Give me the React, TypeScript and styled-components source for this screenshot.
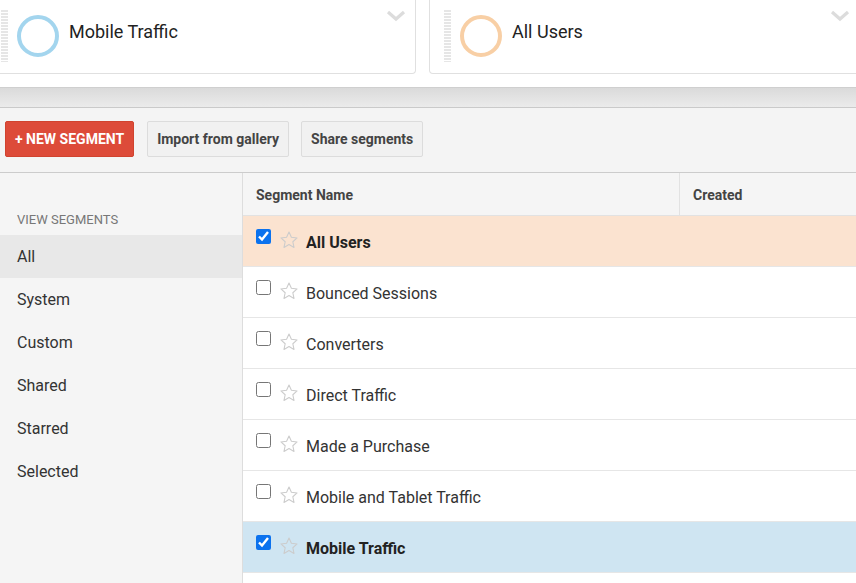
import React from "react";
import styled, { createGlobalStyle } from "styled-components";

const GlobalStyle = createGlobalStyle`
  html, body {
    margin: 0;
    padding: 0;
    background: #ffffff;
    font-family: Roboto, "Liberation Sans", Arial, sans-serif;
    overflow: hidden;
  }
`;

const PageWrapper = styled.main`
  width: 856px;
  height: 583px;
  overflow: hidden;
  display: flex;
  flex-direction: column;
`;

/* =========================
   SEGMENT CARDS
========================= */

const CardStrip = styled.div`
  height: 87px;
  display: flex;
  gap: 13px;
  background: #ffffff;
  flex-shrink: 0;
`;

const Card = styled.div<{ $first?: boolean }>`
  position: relative;
  box-sizing: border-box;
  height: 74px;
  margin-left: ${(p) => (p.$first ? "-14px" : "0")};
  width: ${(p) => (p.$first ? "430px" : "auto")};
  flex: ${(p) => (p.$first ? "0 0 430px" : "1 1 auto")};
  margin-right: ${(p) => (p.$first ? "0" : "-30px")};
  border: 1px solid #e0e0e0;
  border-top: none;
  border-radius: 0 0 4px 4px;
  display: flex;
  align-items: flex-start;
  padding-left: 14px;
`;

const Handle = styled.div`
  width: 7px;
  height: 52px;
  margin-top: 10px;
  background: repeating-linear-gradient(
    to bottom,
    #e6e6e6 0px,
    #e6e6e6 2px,
    #ffffff 2px,
    #ffffff 3px
  );
`;

const Ring = styled.div<{ $color: string }>`
  box-sizing: border-box;
  width: 42px;
  height: 42px;
  margin: 15px 10px 0 9px;
  border-radius: 50%;
  border: 4px solid ${(p) => p.$color};
`;

const CardTitle = styled.div`
  margin-top: 20px;
  font-size: 18px;
  line-height: 24px;
  color: #222;
`;

const Chevron = styled.svg<{ $right: number }>`
  position: absolute;
  top: 10px;
  right: ${(p) => p.$right}px;
`;

/* =========================
   BAND + TOOLBAR
========================= */

const Band = styled.div`
  height: 19px;
  flex-shrink: 0;
  border-top: 1px solid #cfcfcf;
  border-bottom: 1px solid #cacaca;
  background: linear-gradient(to bottom, #dadada, #ebebeb);
`;

const Toolbar = styled.div`
  height: 65px;
  flex-shrink: 0;
  box-sizing: border-box;
  padding: 13px 0 0 5px;
  display: flex;
  align-items: flex-start;
  gap: 12px;
  background: #f4f4f4;
  border-bottom: 1px solid #cccccc;
`;

const Button = styled.button<{ $primary?: boolean }>`
  height: 36px;
  box-sizing: border-box;
  padding: 0 9px;
  border-radius: 2px;
  font-family: Roboto, "Liberation Sans", Arial, sans-serif;
  font-size: 14px;
  font-weight: 700;
  color: ${(p) => (p.$primary ? "#ffffff" : "#444")};
  background: ${(p) => (p.$primary ? "#dd4b39" : "#f1f1f1")};
  border: 1px solid ${(p) => (p.$primary ? "#d0432f" : "#dcdcdc")};
  margin-right: ${(p) => (p.$primary ? "1px" : "0")};
  cursor: pointer;
`;

/* =========================
   MAIN: SIDEBAR + TABLE
========================= */

const Main = styled.div`
  flex: 1;
  display: flex;
  min-height: 0;
`;

const Sidebar = styled.nav`
  width: 243px;
  flex-shrink: 0;
  box-sizing: border-box;
  padding-top: 39px;
  background: #f5f5f5;
  border-right: 1px solid #dddddd;
`;

const SideLabel = styled.div`
  padding-left: 17px;
  font-size: 13px;
  line-height: 16px;
  color: #777;
  text-transform: uppercase;
  margin-bottom: 7px;
`;

const SideItem = styled.div<{ $active?: boolean }>`
  height: 43px;
  display: flex;
  align-items: center;
  padding-left: 17px;
  font-size: 16px;
  color: #333;
  background: ${(p) => (p.$active ? "#e8e8e8" : "transparent")};
`;

const Table = styled.div`
  flex: 1;
  display: flex;
  flex-direction: column;
  overflow: hidden;
  background: #ffffff;
`;

const HeaderRow = styled.div`
  height: 42px;
  flex-shrink: 0;
  display: flex;
  background: #f5f5f5;
  border-bottom: 1px solid #e2e2e2;
`;

const HeaderCell = styled.div<{ $width?: number; $divider?: boolean }>`
  box-sizing: border-box;
  ${(p) => (p.$width ? `width: ${p.$width}px;` : "flex: 1;")}
  display: flex;
  align-items: center;
  padding: 1px 0 0 13px;
  font-size: 14px;
  font-weight: 700;
  color: #444;
  border-left: ${(p) => (p.$divider ? "1px solid #e2e2e2" : "none")};
`;

const Row = styled.div<{ $bg?: string; $selected?: boolean }>`
  height: 51px;
  flex-shrink: 0;
  box-sizing: border-box;
  display: flex;
  align-items: center;
  padding: 2px 0 0 13px;
  background: ${(p) => p.$bg || "#ffffff"};
  border-bottom: 1px solid #e6e6e6;
  font-size: 16px;
  font-weight: ${(p) => (p.$selected ? 700 : 400)};
  color: ${(p) => (p.$selected ? "#222" : "#333")};
`;

const Check = styled.input`
  width: 15px;
  height: 15px;
  margin: 0 8px 12px 0;
  accent-color: #0b72ee;
`;

const Star = styled.svg`
  margin-right: 7px;
  margin-top: -5px;
`;

/* =========================
   DATA
========================= */

const sideItems = ["All", "System", "Custom", "Shared", "Starred", "Selected"];

const segments = [
  { name: "All Users", checked: true, bg: "#fbe3d0" },
  { name: "Bounced Sessions" },
  { name: "Converters" },
  { name: "Direct Traffic" },
  { name: "Made a Purchase" },
  { name: "Mobile and Tablet Traffic" },
  { name: "Mobile Traffic", checked: true, bg: "#cfe5f2" },
];

const ChevronIcon = ({ right }: { right: number }) => (
  <Chevron $right={right} width="20" height="12" viewBox="0 0 20 12">
    <path d="M2 2 L10 9 L18 2" fill="none" stroke="#dcdcdc" strokeWidth="3.2" />
  </Chevron>
);

const StarIcon = () => (
  <Star width="20" height="20" viewBox="0 0 24 24">
    <path
      d="M12 2.5 L14.9 8.8 L21.7 9.5 L16.6 14.1 L18 20.9 L12 17.4 L6 20.9 L7.4 14.1 L2.3 9.5 L9.1 8.8 Z"
      fill="none"
      stroke="#cccccc"
      strokeWidth="1.3"
      strokeLinejoin="round"
    />
  </Star>
);

/* =========================
   COMPONENT
========================= */

const App: React.FC = () => {
  return (
    <PageWrapper>
      <GlobalStyle />
      <CardStrip>
        <Card $first>
          <Handle />
          <Ring $color="#a3d5ee" />
          <CardTitle>Mobile Traffic</CardTitle>
          <ChevronIcon right={9} />
        </Card>
        <Card>
          <Handle />
          <Ring $color="#f8cfa5" />
          <CardTitle>All Users</CardTitle>
          <ChevronIcon right={35} />
        </Card>
      </CardStrip>

      <Band />

      <Toolbar>
        <Button $primary>+ NEW SEGMENT</Button>
        <Button>Import from gallery</Button>
        <Button>Share segments</Button>
      </Toolbar>

      <Main>
        <Sidebar>
          <SideLabel>View Segments</SideLabel>
          {sideItems.map((item) => (
            <SideItem key={item} $active={item === "All"}>
              {item}
            </SideItem>
          ))}
        </Sidebar>

        <Table>
          <HeaderRow>
            <HeaderCell $width={436}>Segment Name</HeaderCell>
            <HeaderCell $divider>Created</HeaderCell>
          </HeaderRow>
          {segments.map((s) => (
            <Row key={s.name} $bg={s.bg} $selected={s.checked}>
              <Check type="checkbox" checked={!!s.checked} readOnly />
              <StarIcon />
              {s.name}
            </Row>
          ))}
        </Table>
      </Main>
    </PageWrapper>
  );
};

export default App;
